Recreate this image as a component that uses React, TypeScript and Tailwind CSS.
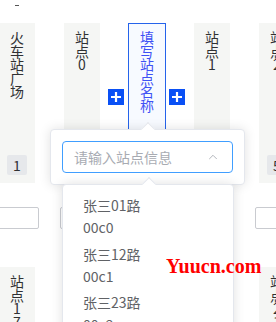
import { ChevronUp } from "lucide-react";

type Station = { name: string; no: number };

function StationCard({ name, no }: Station) {
  return (
    <div className="flex w-[36px] shrink-0 flex-col items-center">
      <div className="flex h-[160px] w-[36px] flex-col items-center justify-between bg-[#f5f6f4] pt-[8px] pb-[8px]">
        <div className="w-[14px] break-all text-center text-[14px] leading-[13.5px] text-[#303133]">
          {name}
        </div>
        <span className="flex h-[20px] w-[20px] items-center justify-center rounded-[2px] bg-[#e6e8eb] text-[14px] leading-none text-[#303133]">
          {no}
        </span>
      </div>
      <div className="mt-[24px] h-[22px] w-[44px] shrink-0 rounded-[2px] border border-[#c9cbd0] bg-white" />
    </div>
  );
}

function PlusButton({ className }: { className: string }) {
  return (
    <button
      className={
        "absolute top-[66px] flex h-[16px] w-[16px] items-center justify-center bg-[#0a50f5] " +
        className
      }
    >
      <svg width="12" height="12" viewBox="0 0 12 12">
        <path d="M6 1v10M1 6h10" stroke="#fff" strokeWidth="2.2" />
      </svg>
    </button>
  );
}

function EditingCard() {
  return (
    <div className="relative flex w-[36px] shrink-0 flex-col items-center">
      <PlusButton className="left-[-21px]" />
      <div className="mx-[-1px] flex h-[160px] w-[38px] shrink-0 justify-center border border-[#2563eb] bg-[#f7faff] pt-[7px]">
        <div className="w-[14px] break-all text-center text-[14px] leading-[13.5px] text-[#3f51f5]">
          填写站点名称
        </div>
      </div>
      <PlusButton className="right-[-20px]" />
      <div className="mt-[24px] h-[22px] w-[44px] shrink-0 rounded-[2px] border border-[#c9cbd0] bg-white" />
    </div>
  );
}

const options = [
  { line: "张三01路", code: "00c0" },
  { line: "张三12路", code: "00c1" },
  { line: "张三23路", code: "00c2" },
  { line: "张三34路", code: "00c3" },
];

export default function App() {
  return (
    <div className="relative h-[322px] w-[276px] overflow-hidden bg-white font-['Noto_Sans_CJK_SC',sans-serif]">
      <div className="h-[23px] pt-[5px] pl-[15px]">
        <div className="h-[1px] w-[4px] bg-[#555]" />
      </div>

      <div className="ml-[-1px] flex gap-x-[29px]">
        <StationCard name="火车站广场" no={1} />
        <StationCard name="站点0" no={2} />
        <EditingCard />
        <StationCard name="站点1" no={4} />
        <StationCard name="站点2" no={5} />
      </div>

      <div className="mt-[38px] ml-[-1px] flex gap-x-[29px]">
        <StationCard name="站点17" no={18} />
        <StationCard name="站点18" no={19} />
        <StationCard name="站点19" no={20} />
        <StationCard name="站点20" no={21} />
        <StationCard name="站点21" no={22} />
      </div>

      {/* popover with select */}
      <div className="absolute top-[129px] left-[50px] w-[195px] rounded-[4px] border border-[#e4e7ed] bg-white p-[11px] shadow-[0_0_12px_rgba(0,0,0,0.12)]">
        <div className="absolute top-[-6px] left-[92px] h-[10px] w-[10px] rotate-45 border-t border-l border-[#e4e7ed] bg-white" />
        <div className="flex h-[32px] items-center justify-between rounded-[4px] border border-[#409eff] pr-[12px] pl-[11px]">
          <span className="text-[14px] text-[#a8abb2]">请输入站点信息</span>
          <ChevronUp size={14} color="#a8abb2" strokeWidth={1.5} />
        </div>
      </div>

      {/* select dropdown */}
      <div className="absolute top-[184px] left-[62px] h-[200px] w-[172px] rounded-[4px] border border-[#e4e7ed] bg-white shadow-[0_0_12px_rgba(0,0,0,0.12)]">
        <div className="absolute top-[-6px] left-[81px] h-[10px] w-[10px] rotate-45 border-t border-l border-[#e4e7ed] bg-white" />
        <ul className="pt-[7px]">
          {options.map((o) => (
            <li key={o.code} className="py-[2.25px] pl-[20px] text-[14px] leading-[22px] text-[#606266]">
              <div>{o.line}</div>
              <div>{o.code}</div>
            </li>
          ))}
        </ul>
      </div>

      <div className="absolute top-[256px] left-[166px] font-['Liberation_Serif',serif] text-[20px] leading-none font-bold text-[#ff0000]">
        Yuucn.com
      </div>
    </div>
  );
}
